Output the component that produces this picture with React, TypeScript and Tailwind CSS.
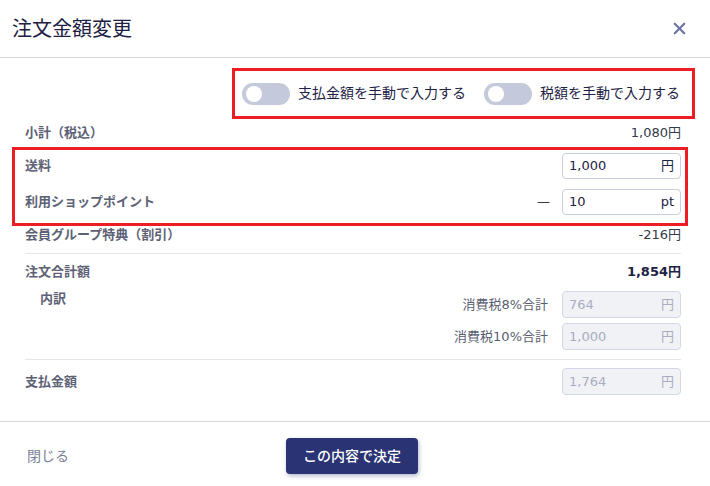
import { X } from "lucide-react";

const font = {
  fontFamily: '"DejaVu Sans", "Noto Sans CJK JP", sans-serif',
};

function Toggle() {
  return (
    <span className="relative inline-flex h-[22px] w-[48px] items-center rounded-full bg-[#c4c9dc]">
      <span className="ml-[4px] h-[16px] w-[16px] rounded-full bg-white" />
    </span>
  );
}

function AmountInput({
  value,
  unit,
  disabled = false,
  h = "h-[26px]",
}: {
  value: string;
  unit: string;
  disabled?: boolean;
  h?: string;
}) {
  return (
    <div
      className={`flex ${h} w-[119px] items-center justify-between rounded-[4px] border px-[6px] text-[13px] ${
        disabled
          ? "border-[#d3d7e3] bg-[#f1f2f6] text-[#a9adbf]"
          : "border-[#c9cfe0] bg-white text-[#1d2245]"
      }`}
    >
      <span>{value}</span>
      <span>{unit}</span>
    </div>
  );
}

export default function App() {
  return (
    <div className="h-[486px] w-[710px] overflow-hidden bg-white" style={font}>
      {/* HEADER */}
      <div className="flex h-[58px] items-center justify-between border-b border-[#d3d8e0] pl-[12px] pr-[21px]">
        <h1 className="text-[20px] font-normal text-[#1d2043]">注文金額変更</h1>
        <X size={19} strokeWidth={2.8} className="text-[#6f75a3]" />
      </div>

      {/* BODY */}
      <div className="pl-[25px] pr-[29px] pt-[10px]">
        <div className="flex justify-end">
          <div className="-mr-[14px] flex h-[51px] items-center gap-[8px] border-[3px] border-[#ee1c25] pl-[7px] pr-[12px] text-[14px] text-[#1d2245]">
            <Toggle />
            <span className="mr-[10px]">支払金額を手動で入力する</span>
            <Toggle />
            <span>税額を手動で入力する</span>
          </div>
        </div>

        <div className="flex h-[28px] items-center justify-between text-[13px]">
          <span className="font-semibold text-[#5d6175]">小計（税込）</span>
          <span className="text-[#343a4b]">1,080円</span>
        </div>

        <div className="-ml-[13px] -mr-[7px] flex h-[79px] flex-col gap-[4px] border-[3px] border-[#ee1c25] pl-[10px] pr-[4px] text-[13px]">
          <div className="flex h-[32px] items-center justify-between">
            <span className="font-semibold text-[#5d6175]">送料</span>
            <AmountInput value="1,000" unit="円" />
          </div>
          <div className="flex h-[32px] items-center justify-between">
            <span className="font-semibold text-[#5d6175]">利用ショップポイント</span>
            <div className="flex items-center gap-[12px]">
              <span className="text-[#343a4b]">—</span>
              <AmountInput value="10" unit="pt" />
            </div>
          </div>
        </div>

        <div className="flex h-[18px] items-center justify-between text-[13px]">
          <span className="font-semibold text-[#5d6175]">会員グループ特典（割引）</span>
          <span className="text-[#343a4b]">-216円</span>
        </div>

        <div className="mt-[9px] border-t border-[#e4e6eb]" />

        <div className="flex h-[36px] items-center justify-between text-[13px]">
          <span className="font-semibold text-[#5d6175]">注文合計額</span>
          <span className="font-bold text-[#1c2145]">1,854円</span>
        </div>

        <div className="flex justify-between text-[13px]">
          <span className="pl-[15px] leading-[18px] font-semibold text-[#5d6175]">内訳</span>
          <div className="flex flex-col items-end gap-[5px] pt-[1px]">
            <div className="flex items-center gap-[14px]">
              <span className="text-[#585d70]">消費税8%合計</span>
              <AmountInput value="764" unit="円" disabled h="h-[27px]" />
            </div>
            <div className="flex items-center gap-[14px]">
              <span className="text-[#585d70]">消費税10%合計</span>
              <AmountInput value="1,000" unit="円" disabled h="h-[27px]" />
            </div>
          </div>
        </div>

        <div className="mt-[9px] border-t border-[#e4e6eb]" />

        <div className="mt-[8px] flex items-center justify-between text-[13px]">
          <span className="font-semibold text-[#5d6175]">支払金額</span>
          <AmountInput value="1,764" unit="円" disabled h="h-[27px]" />
        </div>
      </div>

      {/* FOOTER */}
      <div className="mt-[26px] flex h-[69px] items-center border-t border-[#d3d8e0] pl-[27px]">
        <button className="text-[14px] text-[#7a7f98]">閉じる</button>
        <button className="ml-[217px] h-[36px] w-[132px] rounded-[4px] bg-[#2a3474] text-[14px] font-medium text-white shadow-[1px_2px_4px_rgba(42,52,116,0.35)]">
          この内容で決定
        </button>
      </div>
    </div>
  );
}
